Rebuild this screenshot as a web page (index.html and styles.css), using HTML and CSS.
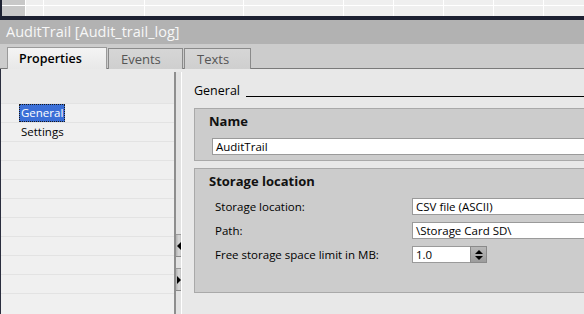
FILE: index.html
```html
<!DOCTYPE html>
<html>
<head>
<meta charset="utf-8">
<link rel="stylesheet" href="styles.css">
</head>
<body>
<div class="page">
  <div class="topgrid">
    <div class="cell hdr"></div><div class="cell"></div><div class="cell"></div><div class="cell"></div><div class="cell"></div><div class="cell"></div><div class="cell"></div><div class="cell"></div><div class="cell"></div><div class="cell"></div>
    <div class="cell hdr"></div><div class="cell"></div><div class="cell"></div><div class="cell"></div><div class="cell"></div><div class="cell"></div><div class="cell"></div><div class="cell"></div><div class="cell"></div><div class="cell"></div>
  </div>
  <div class="darkbar"></div>
  <div class="titlebar">AuditTrail [Audit_trail_log]</div>
  <div class="tabstrip">
    <div class="tab active">Properties</div>
    <div class="tab">Events</div>
    <div class="tab">Texts</div>
  </div>
  <div class="main">
    <div class="nav">
      <div class="navhead"></div>
      <div class="navrow"><span class="navitem selected">General</span></div>
      <div class="navrow"><span class="navitem">Settings</span></div>
      <div class="navrow"></div>
      <div class="navrow"></div>
      <div class="navrow"></div>
      <div class="navrow"></div>
      <div class="navrow"></div>
      <div class="navrow"></div>
      <div class="navrow"></div>
      <div class="navrow"></div>
      <div class="navrow"></div>
    </div>
    <div class="splitter">
      <div class="track">
        <div class="spacer"></div>
        <div class="sbtn"><span class="tri-left"></span></div>
        <div class="sgap"></div>
        <div class="sbtn"><span class="tri-right"></span></div>
      </div>
    </div>
    <div class="content">
      <div class="sectionhead"><span class="sectiontitle">General</span><span class="rule"></span></div>
      <div class="group namegroup">
        <div class="grouptitle">Name</div>
        <div class="field wide">AuditTrail</div>
      </div>
      <div class="group storagegroup">
        <div class="grouptitle">Storage location</div>
        <div class="form">
          <div class="label">Storage location:</div>
          <div class="field">CSV file (ASCII)</div>
          <div class="label">Path:</div>
          <div class="field">\Storage Card SD\</div>
          <div class="label">Free storage space limit in MB:</div>
          <div class="spin">
            <div class="field spinval">1.0</div>
            <div class="spinbtn"><span class="tri-up"></span><span class="tri-down"></span></div>
          </div>
        </div>
      </div>
    </div>
  </div>
</div>
</body>
</html>
```

FILE: styles.css
```css
* { box-sizing: border-box; }
html, body { margin: 0; padding: 0; }
body {
  width: 584px;
  height: 314px;
  overflow: hidden;
  font-family: "Open Sans", "Noto Sans", sans-serif;
  color: #000;
  background: #e8e8e8;
}
.page { display: flex; flex-direction: column; width: 584px; height: 314px; }

.topgrid {
  display: grid;
  grid-template-columns: 23px 17px 100px 98px 99px 49px 49px 49px 49px 1fr;
  grid-template-rows: 5px 10px;
  column-gap: 1px;
  row-gap: 1px;
  background: #ffffff;
  border-left: 2px solid #1d2132;
  height: 16px;
}
.cell { background: #efefef; }
.cell.hdr { background: #c8c8c8; }
.darkbar { height: 4px; background: #1d2132; }

.titlebar {
  height: 24px;
  background: #b2b2b2;
  color: #f7f7f7;
  font-size: 14.5px;
  line-height: 24px;
  padding-left: 6px;
  white-space: nowrap;
}

.tabstrip {
  height: 25px;
  background: #cccccc;
  border-bottom: 1px solid #7a7a7a;
  display: flex;
  align-items: flex-end;
  padding-left: 7px;
  gap: 1px;
}
.tab {
  height: 21px;
  margin-bottom: -1px;
  border: 1px solid #8a8a8a;
  border-bottom: none;
  background: linear-gradient(#d6d6d6, #cfcfcf);
  color: #555;
  font-size: 13px;
  line-height: 20px;
  padding: 0 12px;
  white-space: nowrap;
}
.tab:nth-child(2) { width: 75px; }
.tab:nth-child(3) { width: 67px; }
.tab.active {
  width: 100px;
  height: 22px;
  background: linear-gradient(#f4f4f4, #e8e8e8);
  border-color: #9a9a9a;
  color: #000;
  font-size: 12.5px;
  font-weight: 600;
  padding-left: 11px;
  margin-bottom: -1px;
  line-height: 22px;
}

.main { flex: 1; display: flex; min-height: 0; }

.nav {
  width: 174px;
  flex: none;
  background: #f0f0f0;
  border-left: 1px solid #2a2e3e;
  overflow: hidden;
}
.navhead { height: 34px; background: #eaeaea; }
.navrow {
  height: 19px;
  border-top: 1px solid #e3e3e3;
  padding-left: 18px;
  font-size: 11.5px;
  line-height: 18px;
}
.navitem { display: inline-block; padding: 0 2px; height: 18px; }
.navitem.selected {
  background: #3b6fd7;
  color: #fff;
  outline: 1px dotted #1a1a1a;
  outline-offset: -1px;
}

.splitter {
  width: 8px;
  flex: none;
  padding-top: 3px;
  background: #e8e8e8;
}
.track {
  height: 100%;
  border-left: 2px solid #8e8e8e;
  border-right: 1px solid #ffffff;
  background: #e2e2e2;
  display: flex;
  flex-direction: column;
}
.spacer { height: 162px; }
.sbtn {
  height: 23px;
  background: linear-gradient(90deg, #b4b4b4, #d8d8d8 60%, #c4c4c4);
  border-top: 1px solid #9a9a9a;
  border-bottom: 1px solid #8a8a8a;
  display: flex;
  align-items: center;
  justify-content: flex-start;
}
.sgap { height: 11px; }
.tri-left { width: 0; height: 0; border-top: 4px solid transparent; border-bottom: 4px solid transparent; border-right: 4px solid #000; margin-left: 1px; }
.tri-right { width: 0; height: 0; border-top: 4px solid transparent; border-bottom: 4px solid transparent; border-left: 4px solid #000; margin-left: 1px; }

.content {
  flex: none;
  width: 430px;
  padding: 14px 0 0 12px;
  background: #e8e8e8;
}
.sectionhead {
  display: flex;
  align-items: flex-end;
  height: 14px;
  gap: 6px;
}
.sectiontitle { font-size: 12.5px; line-height: 16px; white-space: nowrap; margin-bottom: -2px; }
.rule { flex: 1; border-bottom: 1px solid #000; height: 0; }

.group {
  background: #cccccc;
  border: 1px solid #a9a9a9;
  padding: 4px 0 0 14px;
}
.namegroup { margin-top: 11px; height: 53px; }
.storagegroup { margin-top: 7px; height: 125px; }
.grouptitle { font-size: 13px; font-weight: 700; line-height: 16px; color: #111; }
.field {
  height: 17px;
  background: #fff;
  border: 1px solid #9a9a9a;
  border-right: none;
  font-size: 11.5px;
  line-height: 15px;
  padding-left: 3px;
  white-space: nowrap;
}
.field.wide { margin-top: 9px; margin-left: 3px; }

.form {
  margin-top: 9px;
  margin-left: 6px;
  display: grid;
  grid-template-columns: 197px 1fr;
  grid-auto-rows: 17px;
  row-gap: 7px;
}
.label { font-size: 11.5px; line-height: 17px; white-space: nowrap; }
.spin { display: flex; }
.spinval { width: 58px; }
.spinbtn {
  width: 17px;
  height: 17px;
  background: linear-gradient(#b8b8b8, #9c9c9c);
  border: 1px solid #8a8a8a;
  display: flex;
  flex-direction: column;
  align-items: center;
  justify-content: center;
  gap: 2px;
}
.tri-up { width: 0; height: 0; border-left: 4px solid transparent; border-right: 4px solid transparent; border-bottom: 4px solid #000; }
.tri-down { width: 0; height: 0; border-left: 4px solid transparent; border-right: 4px solid transparent; border-top: 4px solid #000; }
```
